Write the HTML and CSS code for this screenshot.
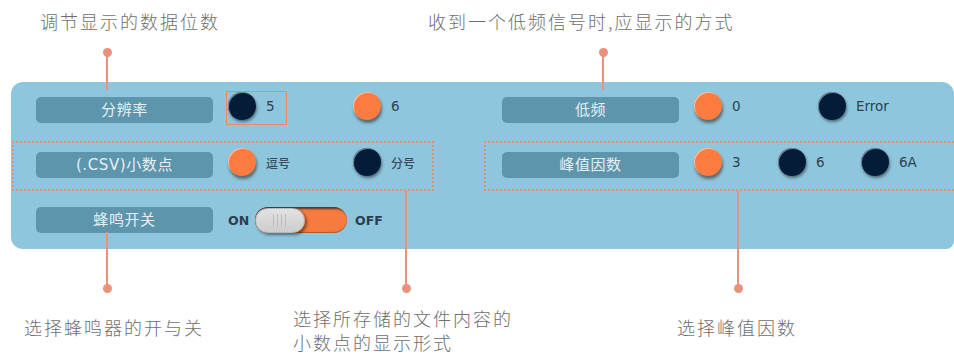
FILE: index.html
```html
<!DOCTYPE html>
<html lang="zh">
<head>
<meta charset="utf-8">
<title>设置</title>
<link rel="stylesheet" href="styles.css">
</head>
<body>
<div class="page">
  <div class="top-notes">
    <div class="note note-tl">调节显示的数据位数</div>
    <div class="note">收到一个低频信号时,应显示的方式</div>
  </div>

  <div class="panel">
    <div class="col col-left">
      <div class="row row1">
        <div class="label">分辨率</div>
        <div class="opt w125 hl"><span class="dot dark"></span><span class="val">5</span></div>
        <div class="opt"><span class="dot orange"></span><span class="val">6</span></div>
      </div>
      <div class="row boxed">
        <div class="label">(.CSV)小数点</div>
        <div class="opt w125"><span class="dot orange"></span><span class="val small">逗号</span></div>
        <div class="opt"><span class="dot dark"></span><span class="val small">分号</span></div>
      </div>
      <div class="row row3">
        <div class="label">蜂鸣开关</div>
        <div class="switch">
          <span class="sw-text">ON</span>
          <span class="toggle"><span class="knob"><span class="grip"></span></span></span>
          <span class="sw-text">OFF</span>
        </div>
      </div>
    </div>
    <div class="col col-right">
      <div class="row row1">
        <div class="label">低频</div>
        <div class="opt w124"><span class="dot orange"></span><span class="val">0</span></div>
        <div class="opt"><span class="dot dark"></span><span class="val">Error</span></div>
      </div>
      <div class="row boxed open-right">
        <div class="label">峰值因数</div>
        <div class="opt w84"><span class="dot orange"></span><span class="val">3</span></div>
        <div class="opt w83"><span class="dot dark"></span><span class="val">6</span></div>
        <div class="opt"><span class="dot dark"></span><span class="val">6A</span></div>
      </div>
    </div>
  </div>

  <div class="bottom-notes">
    <div class="note note-b1">选择蜂鸣器的开与关</div>
    <div class="note note-b2">选择所存储的文件内容的<br>小数点的显示形式</div>
    <div class="note note-b3">选择峰值因数</div>
  </div>

  <span class="conn c1"></span><span class="pin p1"></span>
  <span class="conn c2"></span><span class="pin p2"></span>
  <span class="conn c3"></span><span class="pin p3"></span>
  <span class="conn c4"></span><span class="pin p4"></span>
  <span class="conn c5"></span><span class="pin p5"></span>
</div>
</body>
</html>
```

FILE: styles.css
```css
* { box-sizing: border-box; }
html, body { margin: 0; padding: 0; background: #fff; }
body { font-family: "Noto Sans CJK SC", "Noto Sans", sans-serif; }

.page {
  position: relative;
  width: 954px;
  height: 354px;
  overflow: hidden;
}

.note {
  font-family: "Noto Sans CJK SC", sans-serif;
  font-size: 18px;
  font-weight: 300;
  line-height: 26px;
  letter-spacing: 2px;
  color: #6e6e6e;
  white-space: nowrap;
}

.top-notes {
  display: flex;
  height: 82px;
  padding-top: 8px;
  padding-left: 40px;
}
.note-tl { width: 388px; }

.panel {
  margin-left: 11px;
  width: 943px;
  height: 167px;
  background: #8ec6dd;
  border-radius: 12px 12px 8px 12px;
  overflow: hidden;
  display: grid;
  grid-template-columns: 422px 1fr;
  column-gap: 50px;
  padding-left: 1px;
}

.col { display: flex; flex-direction: column; }

.row { display: flex; align-items: flex-start; }
.row1 { margin-top: 15px; height: 26px; margin-bottom: 18px; }
.col-left .row1 { padding-left: 24px; }
.col-right .row1 { padding-left: 18px; }

.boxed {
  height: 50px;
  border: 2px dotted #ef8c6f;
  padding-top: 9px;
}
.col-left .boxed { padding-left: 22px; }
.col-right .boxed { padding-left: 16px; border-right: none; }

.row3 { margin-top: 16px; padding-left: 24px; height: 26px; }

.label {
  flex: none;
  width: 177px;
  height: 26px;
  margin-right: 15px;
  border-radius: 5px;
  background: #5d96ac;
  color: #e6eff3;
  font-family: "DejaVu Sans", "Noto Sans CJK SC", sans-serif;
  font-size: 15px;
  letter-spacing: 0.6px;
  line-height: 26px;
  text-align: center;
}

.opt {
  flex: none;
  display: flex;
  align-items: center;
  margin-top: -5px;
  height: 28px;
  position: relative;
}
.boxed .opt { margin-top: -4px; }
.w125 { width: 125px; }
.w124 { width: 124px; }
.w84 { width: 84px; }
.w83 { width: 83px; }

.hl::after {
  content: "";
  position: absolute;
  left: -2px;
  top: -1px;
  width: 59px;
  height: 32px;
  border: 1.5px solid #ef8a5e;
}

.dot {
  flex: none;
  width: 28px;
  height: 28px;
  border-radius: 50%;
  margin-right: 10px;
}
.dark {
  background: #041c38;
  box-shadow: inset 1px 1px 0 rgba(255,255,255,0.45), 1px 2px 3px rgba(0,0,0,0.45);
}
.orange {
  background: #fb7b40;
  box-shadow: inset 1px 1px 0 rgba(255,255,255,0.5), 1px 3px 3px rgba(40,30,20,0.55);
}

.val {
  font-family: "DejaVu Sans", sans-serif;
  font-size: 13.5px;
  color: #2b4154;
}
.val.small {
  font-family: "Noto Sans CJK SC", sans-serif;
  font-size: 12px;
  font-weight: 500;
  color: #3a4c5c;
}

.switch {
  display: flex;
  align-items: center;
  height: 26px;
}
.sw-text {
  font-family: "DejaVu Sans", sans-serif;
  font-weight: 700;
  font-size: 12.5px;
  color: #2c3e4e;
}
.toggle {
  display: flex;
  align-items: center;
  width: 92px;
  height: 26px;
  margin: 0 8px 0 6px;
  border-radius: 13px;
  background: #f77b3f;
  box-shadow: inset 2px 2px 2px rgba(20,30,40,0.75), inset 0 -1px 1px rgba(0,0,0,0.3);
}
.knob {
  display: flex;
  align-items: center;
  justify-content: center;
  width: 50px;
  height: 25px;
  border-radius: 13px;
  background: linear-gradient(#e2e2e2, #cdcdcd);
  border: 1px solid #b9b9b9;
  box-shadow: 2px 2px 3px rgba(0,0,0,0.45);
}
.grip {
  width: 15px;
  height: 13px;
  background: repeating-linear-gradient(90deg, #bdbdbd 0 1px, transparent 1px 4px);
}

.bottom-notes {
  display: flex;
  align-items: flex-start;
  padding-left: 24px;
}
.note-b1 { width: 269px; margin-top: 65px; }
.note-b2 { width: 384px; margin-top: 57px; line-height: 24px; }
.note-b3 { margin-top: 65px; }

.conn {
  position: absolute;
  width: 2px;
  background: #e8917c;
}
.pin {
  position: absolute;
  width: 9px;
  height: 9px;
  border-radius: 50%;
  background: #e8917c;
}
.c1 { left: 106px; top: 52px; height: 38px; }
.p1 { left: 102.5px; top: 47.5px; }
.c2 { left: 602px; top: 52px; height: 38px; }
.p2 { left: 598.5px; top: 47.5px; }
.c3 { left: 106px; top: 232px; height: 56px; }
.p3 { left: 102.5px; top: 283.5px; }
.c4 { left: 405px; top: 191px; height: 97px; }
.p4 { left: 401.5px; top: 283.5px; }
.c5 { left: 737px; top: 191px; height: 97px; }
.p5 { left: 733.5px; top: 283.5px; }
```
